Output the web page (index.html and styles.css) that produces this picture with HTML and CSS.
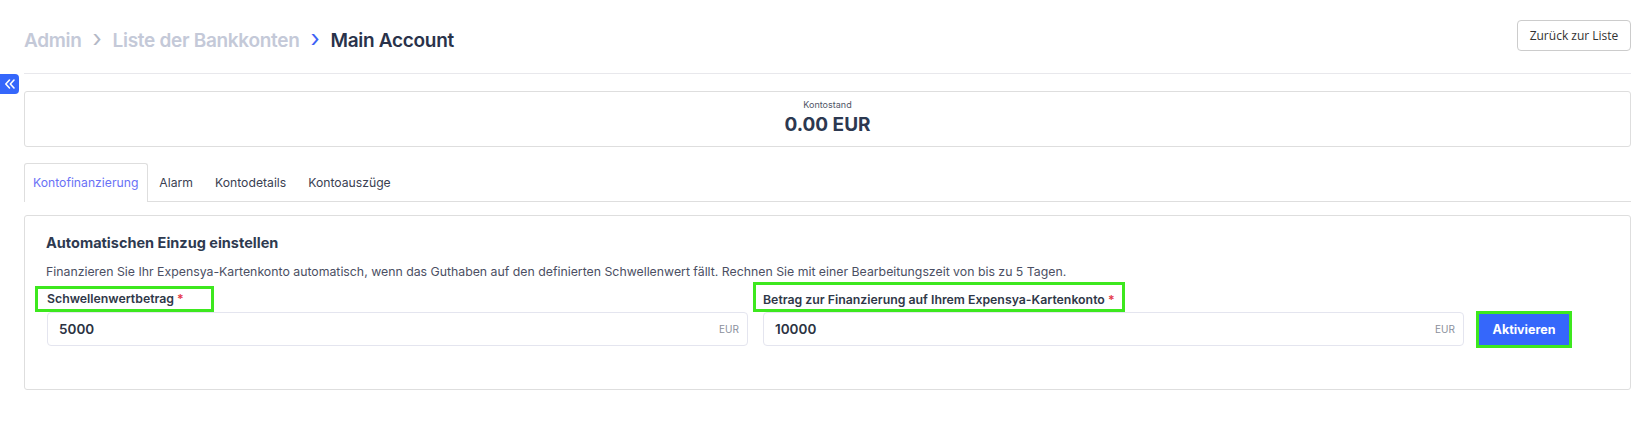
FILE: index.html
```html
<!DOCTYPE html>
<html lang="de">
<head>
    <meta charset="UTF-8">
    <meta name="viewport" content="width=device-width, initial-scale=1.0">
    <title>Main Account</title>
    <link rel="stylesheet" href="styles.css">
</head>
<body>
    <button class="sidebar-toggle" aria-label="Menü einklappen">
        <svg width="12" height="12" viewBox="0 0 12 12" fill="none" stroke="white" stroke-width="1.6" stroke-linecap="round" stroke-linejoin="round">
            <path d="M5.5 2 L1.8 6 L5.5 10"/>
            <path d="M10 2 L6.3 6 L10 10"/>
        </svg>
    </button>

    <div class="page">
        <div class="header">
            <div class="breadcrumb">
                <span class="crumb">Admin</span>
                <span class="sep">&#8250;</span>
                <span class="crumb">Liste der Bankkonten</span>
                <span class="sep active">&#8250;</span>
                <span class="crumb current">Main Account</span>
            </div>
            <button class="back-btn">Zurück zur Liste</button>
        </div>

        <div class="balance">
            <div class="balance-label">Kontostand</div>
            <div class="balance-value">0.00 EUR</div>
        </div>

        <div class="tabs">
            <div class="tab active">Kontofinanzierung</div>
            <div class="tab">Alarm</div>
            <div class="tab">Kontodetails</div>
            <div class="tab">Kontoauszüge</div>
        </div>

        <div class="card">
            <h3 class="card-title">Automatischen Einzug einstellen</h3>
            <p class="card-text">Finanzieren Sie Ihr Expensya-Kartenkonto automatisch, wenn das Guthaben auf den definierten Schwellenwert fällt. Rechnen Sie mit einer Bearbeitungszeit von bis zu 5 Tagen.</p>

            <div class="form">
                <label class="field-label mark-a">Schwellenwertbetrag <span class="req">*</span></label>
                <label class="field-label mark-b">Betrag zur Finanzierung auf Ihrem Expensya-Kartenkonto <span class="req">*</span></label>
                <div></div>

                <div class="input">
                    <span class="input-value">5000</span>
                    <span class="input-unit">EUR</span>
                </div>
                <div class="input">
                    <span class="input-value">10000</span>
                    <span class="input-unit">EUR</span>
                </div>
                <div class="action">
                    <button class="primary-btn">Aktivieren</button>
                </div>
            </div>
        </div>
    </div>
</body>
</html>
```

FILE: styles.css
```css
body {
    margin: 0;
    font-family: Inter, "Noto Sans", sans-serif;
    color: #2e3648;
    background: #fff;
}
.sidebar-toggle {
    position: absolute;
    left: 0;
    top: 74px;
    width: 19px;
    height: 20px;
    padding: 0;
    border: none;
    border-radius: 0 4px 4px 0;
    background-color: #3567fb;
    display: flex;
    justify-content: center;
    align-items: center;
}
.page {
    padding: 20px 18px 0 24px;
}
.header {
    display: flex;
    justify-content: space-between;
    align-items: flex-start;
    padding-bottom: 21px;
    border-bottom: 1px solid #e8e8ec;
}
.breadcrumb {
    display: flex;
    align-items: center;
    gap: 11px;
    margin-top: 8px;
    height: 24px;
    font-size: 19px;
    font-weight: 600;
    letter-spacing: -0.3px;
}
.crumb {
    color: #c4c9d8;
}
.crumb.current {
    color: #29324a;
}
.sep {
    color: #b3b8c6;
    font-size: 24px;
    font-weight: 400;
    line-height: 20px;
    padding-bottom: 3px;
}
.sep.active {
    color: #3d63f5;
}
.back-btn {
    width: 114px;
    height: 31px;
    border: 1px solid #cccccc;
    border-radius: 4px;
    background: #fff;
    font-family: "Open Sans", sans-serif;
    font-size: 12px;
    color: #333;
    padding: 0;
}
.balance {
    margin-top: 17px;
    height: 53px;
    border: 1px solid #dedede;
    border-radius: 3px;
    text-align: center;
    padding-top: 1px;
}
.balance-label {
    font-size: 9px;
    color: #4f5566;
    margin-top: 6px;
    line-height: 12px;
}
.balance-value {
    font-size: 19px;
    font-weight: 700;
    color: #2c3850;
    line-height: 24px;
    margin-top: 2px;
}
.tabs {
    display: flex;
    margin-top: 16px;
    border-bottom: 1px solid #dedede;
}
.tab {
    height: 37px;
    line-height: 37px;
    padding: 0 10px;
    font-size: 12.2px;
    color: #3a4152;
    border: 1px solid transparent;
    border-bottom: none;
    margin-bottom: -1px;
}
.tab.active {
    color: #6a72f6;
    border-color: #dedede;
    border-radius: 3px 3px 0 0;
    background: #fff;
    height: 38px;
    padding: 0 9px 0 8px;
}
.card {
    margin-top: 13px;
    height: 173px;
    border: 1px solid #dedede;
    border-radius: 3px;
    padding: 0 21px;
}
.card-title {
    margin: 17px 0 0;
    font-size: 14.5px;
    font-weight: 700;
    line-height: 20px;
    color: #2e3a50;
}
.card-text {
    margin: 10px 0 0;
    font-size: 12.3px;
    line-height: 18px;
    color: #4b4f63;
}
.form {
    display: grid;
    grid-template-columns: 1fr 1fr 130px;
    column-gap: 15px;
    align-items: end;
    margin: 1px 0 0 1px;
}
.field-label {
    justify-self: start;
    font-size: 12.3px;
    font-weight: 600;
    color: #2f3848;
    line-height: 16px;
    margin-left: -12px;
    border: 3px solid #3de81e;
}
.mark-a {
    padding: 2px 27px 2px 9px;
}
.mark-b {
    padding: 7px 7px 1px 7px;
    margin-left: -10px;
}
.req {
    color: #e53949;
}
.input {
    height: 32px;
    border: 1px solid #e4e5ef;
    border-radius: 4px;
    display: flex;
    justify-content: space-between;
    align-items: center;
    padding: 0 8px 0 11px;
}
.input-value {
    font-size: 13.5px;
    font-weight: 600;
    color: #2b3242;
}
.input-unit {
    font-size: 10px;
    color: #8a8f9c;
}
.action {
    align-self: center;
}
.primary-btn {
    width: 90px;
    height: 31px;
    border: none;
    background-color: #3567fb;
    color: white;
    font-family: Inter, sans-serif;
    font-size: 12.5px;
    font-weight: 700;
    outline: 3px solid #3de81e;
    padding: 0;
}
```
